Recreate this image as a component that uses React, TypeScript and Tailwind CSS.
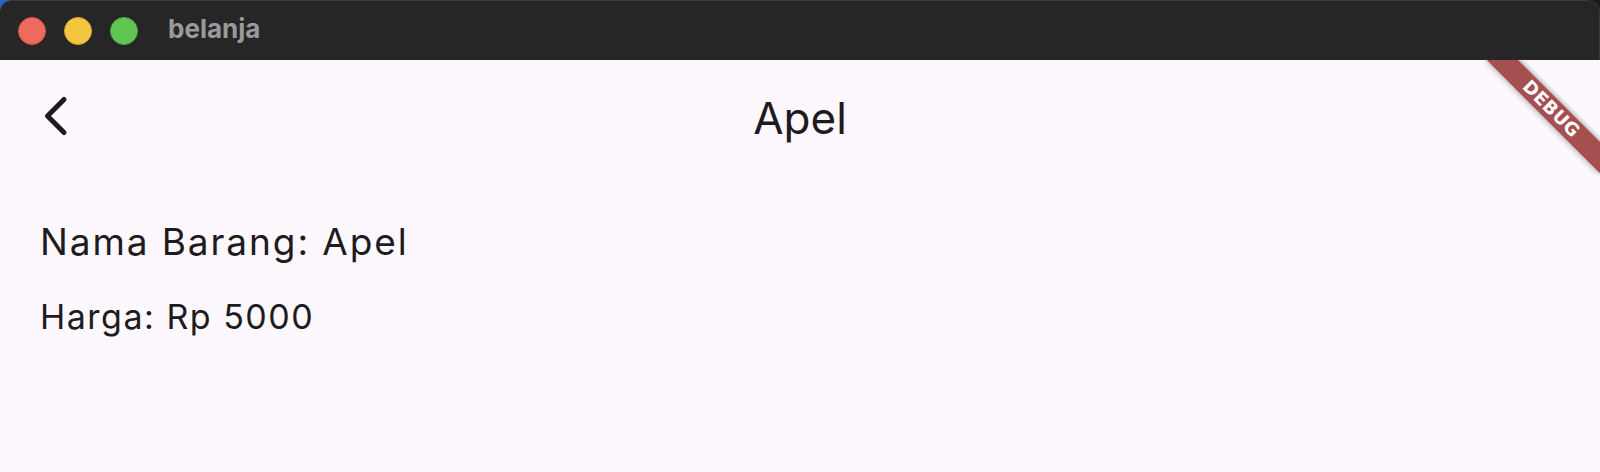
import React from 'react';

const BackIcon: React.FC = () => (
    <svg width="40" height="56" viewBox="0 0 40 56" fill="none" xmlns="http://www.w3.org/2000/svg">
        <path d="M24 11.5 L7.5 28 L24 44.5" stroke="#1d1b20" strokeWidth={5} strokeLinecap="round" strokeLinejoin="round" />
    </svg>
);

const DebugBanner: React.FC = () => (
    <div className="absolute top-0 right-0 w-0 h-0 rotate-45 pointer-events-none">
        <div className="absolute left-[-80px] top-[58px] w-[160px] h-[22px] bg-[#a64f51] shadow-[0_0_6px_rgba(0,0,0,0.45)] flex items-center justify-center">
            <span className="text-white text-[18px] font-black tracking-[0.3px] leading-none [font-family:'DejaVu_Sans',sans-serif]">DEBUG</span>
        </div>
    </div>
);

const App: React.FC = () => {
    return (
        <div className="w-[1600px] h-[472px] overflow-hidden bg-[linear-gradient(90deg,#2d5fc4_0px,#2d5fc4_10px,#1b1b1b_11px)] [font-family:Inter,'Noto_Sans',sans-serif]">
            <div className="flex flex-col h-full rounded-t-[12px] overflow-hidden">
                {/* title bar */}
                <div className="h-[60px] flex items-center bg-[#262626] pl-[18px] rounded-t-[12px] border-t border-r border-[#3a3a3a] shrink-0">
                    <div className="flex gap-[18px]">
                        <span className="w-[28px] h-[28px] rounded-full bg-[#ed6a5e] border border-[#d3574c]" />
                        <span className="w-[28px] h-[28px] rounded-full bg-[#f4c63f] border border-[#d9ab2c]" />
                        <span className="w-[28px] h-[28px] rounded-full bg-[#61c554] border border-[#4ea944]" />
                    </div>
                    <span className="ml-[30px] text-[26px] font-bold text-[#9a9a9a] leading-none pb-[3px]">belanja</span>
                </div>

                {/* window content */}
                <div className="relative flex-1 bg-[#fdf7fe] overflow-hidden">
                    <div className="h-[112px] flex items-center relative">
                        <div className="pl-[40px] flex items-center">
                            <BackIcon />
                        </div>
                        <div className="absolute inset-0 flex items-center justify-center pointer-events-none">
                            <span className="text-[44px] leading-none text-[#1d1b20] pt-[3px]">Apel</span>
                        </div>
                    </div>
                    <div className="px-[40px] pt-[48px] flex flex-col text-[#1d1b20]">
                        <p className="text-[37px] leading-[44px] tracking-[1.9px]">Nama Barang: Apel</p>
                        <p className="mt-[32px] text-[34px] leading-[41px] tracking-[1.5px]">Harga: Rp 5000</p>
                    </div>
                    <DebugBanner />
                </div>
            </div>
        </div>
    );
};

export default App;
